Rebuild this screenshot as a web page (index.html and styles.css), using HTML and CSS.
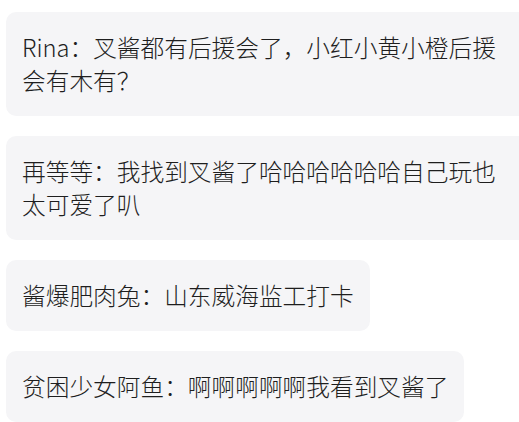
FILE: index.html
```html
<!DOCTYPE html>
<html lang="zh-CN">
<head>
  <meta charset="UTF-8">
  <meta name="viewport" content="width=device-width, initial-scale=1.0">
  <title>评论</title>
  <link rel="stylesheet" href="styles.css">
</head>
<body>
  <!-- Comment list -->
  <div class="comments">
    <div class="bubble">Rina：叉酱都有后援会了，小红小黄小橙后援会有木有？</div>
    <div class="bubble">再等等：我找到叉酱了哈哈哈哈哈哈自己玩也太可爱了叭</div>
    <div class="bubble">酱爆肥肉兔：山东威海监工打卡</div>
    <div class="bubble">贫困少女阿鱼：啊啊啊啊啊我看到叉酱了</div>
  </div>
</body>
</html>
```

FILE: styles.css
```css
/* General Styles */
body {
  margin: 0;
  padding: 0;
  background: #fff;
  color: #1e1e1e;
  font-family: "Noto Sans CJK SC", "Noto Sans", sans-serif;
  overflow: hidden;
}

.comments {
  display: flex;
  flex-direction: column;
  align-items: flex-start;
  gap: 20px;
  width: 528px;
  padding: 12px 0 0 6px;
}

/* Comment bubble */
.bubble {
  box-sizing: border-box;
  max-width: 528px;
  flex-shrink: 0;
  padding: 19px 16px;
  background: #f5f5f7;
  border-radius: 10px;
  font-size: 23.7px;
  font-weight: 300;
  line-height: 33px;
}
```
